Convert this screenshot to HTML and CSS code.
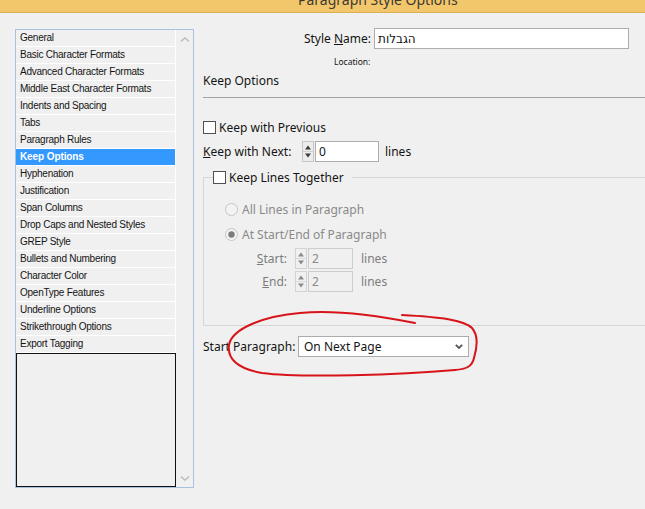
FILE: index.html
```html
<!DOCTYPE html>
<html lang="en">
<head>
  <meta charset="UTF-8">
  <title>Paragraph Style Options</title>
  <link rel="stylesheet" href="styles.css">
</head>
<body>
  <div class="page">
    <div class="titlebar"><span>Paragraph Style Options</span></div>

    <div class="dialog">
      <!-- Category list -->
      <div class="list">
        <ul class="items">
          <li>General</li>
          <li>Basic Character Formats</li>
          <li>Advanced Character Formats</li>
          <li>Middle East Character Formats</li>
          <li>Indents and Spacing</li>
          <li>Tabs</li>
          <li>Paragraph Rules</li>
          <li class="sel">Keep Options</li>
          <li>Hyphenation</li>
          <li>Justification</li>
          <li>Span Columns</li>
          <li>Drop Caps and Nested Styles</li>
          <li>GREP Style</li>
          <li>Bullets and Numbering</li>
          <li>Character Color</li>
          <li>OpenType Features</li>
          <li>Underline Options</li>
          <li>Strikethrough Options</li>
          <li>Export Tagging</li>
          <li class="blank"></li>
        </ul>
        <div class="scroll">
          <svg width="10" height="5" viewBox="0 0 10 5"><polyline points="1,4.5 5,0.8 9,4.5" fill="none" stroke="#b8b8b8" stroke-width="1.3"/></svg>
          <svg width="10" height="5" viewBox="0 0 10 5"><polyline points="1,0.5 5,4.2 9,0.5" fill="none" stroke="#b8b8b8" stroke-width="1.3"/></svg>
        </div>
      </div>

      <!-- Options panel -->
      <div class="panel">
        <div class="name-row">
          <span class="name-label">Style <u>N</u>ame:</span>
          <div class="field name-field">הגבלות</div>
        </div>
        <div class="location">Location:</div>
        <div class="heading">Keep Options</div>
        <div class="rule"></div>

        <div class="check-row"><span class="check"></span>Keep with Previous</div>

        <div class="row">
          <span class="next-label"><u>K</u>eep with Next:</span>
          <svg class="spin" width="12" height="21" viewBox="0 0 12 21">
            <rect x="0.5" y="0.5" width="11" height="20" fill="#ececec" stroke="#c6c6c6"/>
            <line x1="1" y1="10.5" x2="11" y2="10.5" stroke="#d0d0d0"/>
            <path d="M3 8.5 L6 4.5 L9 8.5Z" fill="#3a3a3a"/>
            <path d="M3 12.5 L6 16.5 L9 12.5Z" fill="#3a3a3a"/>
          </svg>
          <div class="field num">0</div>
          <span class="unit">lines</span>
        </div>

        <fieldset class="group">
          <legend><span class="check"></span>Keep Lines Together</legend>
          <div class="radio-row first">
            <svg class="radio" width="13" height="13" viewBox="0 0 13 13"><circle cx="6.5" cy="6.5" r="6" fill="#f3f3f3" stroke="#c4c4c4"/></svg>
            All Lines in Paragraph
          </div>
          <div class="radio-row">
            <svg class="radio" width="13" height="13" viewBox="0 0 13 13"><circle cx="6.5" cy="6.5" r="6" fill="#f3f3f3" stroke="#c4c4c4"/><circle cx="6.5" cy="6.5" r="3.2" fill="#7c7c7c"/></svg>
            At Start/End of Paragraph
          </div>
          <div class="row sub first-sub">
            <span class="sub-label"><u>S</u>tart:</span>
            <svg class="spin" width="12" height="21" viewBox="0 0 12 21">
              <rect x="0.5" y="0.5" width="11" height="20" fill="#f0f0f0" stroke="#d3d3d3"/>
              <line x1="1" y1="10.5" x2="11" y2="10.5" stroke="#dadada"/>
              <path d="M3 8.5 L6 4.5 L9 8.5Z" fill="#8a8a8a"/>
              <path d="M3 12.5 L6 16.5 L9 12.5Z" fill="#8a8a8a"/>
            </svg>
            <div class="field num off">2</div>
            <span class="unit">lines</span>
          </div>
          <div class="row sub">
            <span class="sub-label"><u>E</u>nd:</span>
            <svg class="spin" width="12" height="21" viewBox="0 0 12 21">
              <rect x="0.5" y="0.5" width="11" height="20" fill="#f0f0f0" stroke="#d3d3d3"/>
              <line x1="1" y1="10.5" x2="11" y2="10.5" stroke="#dadada"/>
              <path d="M3 8.5 L6 4.5 L9 8.5Z" fill="#8a8a8a"/>
              <path d="M3 12.5 L6 16.5 L9 12.5Z" fill="#8a8a8a"/>
            </svg>
            <div class="field num off">2</div>
            <span class="unit">lines</span>
          </div>
        </fieldset>

        <div class="row start-row">
          <span class="start-label">Start Para<u>g</u>raph:</span>
          <div class="select">
            On Next Page
            <svg width="8" height="5" viewBox="0 0 8 5"><polyline points="0.8,0.8 4,4 7.2,0.8" fill="none" stroke="#555" stroke-width="1.8"/></svg>
          </div>
        </div>
      </div>
    </div>

    <!-- hand-drawn red mark over the screenshot -->
    <svg class="markup" width="645" height="509" viewBox="0 0 645 509">
      <path d="M415 323 C385 317 340 309 300 313 C265 316 232 328 229 345 C227 360 240 369 262 373 C300 378 400 375 455 370 C466 369 472 367 474 358 C477 348 479 336 472 328 C464 320 440 317 402 315"
            fill="none" stroke="#d8141b" stroke-width="2" stroke-linecap="round"/>
    </svg>
  </div>
</body>
</html>
```

FILE: styles.css
```css
/* Base */
* {
  box-sizing: border-box;
}

body {
  margin: 0;
  background: #f0f0f0;
  font-family: "Noto Sans", "DejaVu Sans", sans-serif;
  font-size: 12px;
  color: #141414;
}

.page {
  position: relative;
  width: 645px;
  height: 509px;
  overflow: hidden;
}

/* Window title (cut off at the top) */
.titlebar {
  height: 13px;
  background: #f2c66b;
  border-bottom: 1px solid #dcae55;
  overflow: hidden;
  padding-left: 298px;
}

.titlebar span {
  display: block;
  margin-top: -10px;
  line-height: 20px;
  font-size: 14px;
  color: #3d3a33;
  white-space: nowrap;
}

.dialog {
  display: flex;
  padding: 15px 0 0 15px;
}

/* Category list */
.list {
  display: flex;
  width: 179px;
  height: 459px;
  margin-top: 1px;
  border: 1px solid #a9c1df;
}

.items {
  list-style: none;
  margin: 0;
  padding: 0;
  width: 160px;
  display: flex;
  flex-direction: column;
  font-family: "Liberation Sans", Arial, sans-serif;
  font-size: 10px;
  letter-spacing: -0.25px;
}

.items li {
  height: 17px;
  line-height: 16px;
  padding-left: 4px;
  border-bottom: 1px solid #fff;
  border-right: 1px solid #fff;
  white-space: nowrap;
}

.items li.sel {
  background: #3399ff;
  color: #fff;
  font-weight: bold;
  letter-spacing: -0.1px;
}

.items li.blank {
  flex: 1;
  border: 1px solid #111;
}

.scroll {
  flex: 1;
  display: flex;
  flex-direction: column;
  justify-content: space-between;
  align-items: center;
  padding: 7px 0 6px;
}

.scroll svg {
  display: block;
}

/* Options panel */
.panel {
  flex: 1;
  margin-left: 9px;
}

.name-row {
  display: flex;
  justify-content: flex-end;
  align-items: center;
  height: 21px;
  padding-right: 16px;
}

.name-label {
  margin-right: 3px;
}

.field {
  height: 21px;
  line-height: 19px;
  background: #fff;
  border: 1px solid #abadb3;
  padding-left: 3px;
}

.name-field {
  width: 255px;
}

.location {
  margin-top: 7px;
  padding-left: 131px;
  line-height: 12px;
  font-size: 8.5px;
}

.heading {
  margin-top: 5px;
  line-height: 16px;
}

.rule {
  margin-top: 8px;
  border-top: 1px solid #a3a3a3;
}

.check {
  display: inline-block;
  width: 13px;
  height: 13px;
  background: #fff;
  border: 1px solid #505050;
  margin-right: 3px;
}

.check-row {
  display: flex;
  align-items: center;
  height: 16px;
  margin-top: 21px;
}

.row {
  display: flex;
  align-items: center;
  height: 21px;
  margin-top: 6px;
}

.next-label {
  width: 99px;
}

.spin {
  display: block;
  margin-right: 1px;
}

.num {
  width: 64px;
}

.unit {
  margin-left: 6px;
}

/* Keep Lines Together group */
.group {
  margin: 7px 0 0;
  padding: 0 0 33px 9px;
  border: 1px solid #d6d6d6;
  border-right: none;
  min-width: 0;
}

.group legend {
  display: flex;
  align-items: center;
  height: 16px;
  padding: 0 8px 0 0;
}

.radio-row {
  display: flex;
  align-items: center;
  height: 16px;
  margin: 9px 0 0 12px;
  color: #8a8a8a;
}

.radio-row.first {
  margin-top: 16px;
}

.radio {
  display: block;
  margin-right: 4px;
}

.sub {
  color: #7d7d7d;
  margin-top: 2px;
}

.sub.first-sub {
  margin-top: 6px;
}

.sub-label {
  width: 74px;
  text-align: right;
  margin-right: 8px;
}

.sub .num {
  width: 45px;
}

.num.off {
  background: #f0f0f0;
  border-color: #cdcdcd;
  color: #8a8a8a;
}

.sub .unit {
  margin-left: 8px;
}

/* Start Paragraph */
.start-row {
  margin-top: 10px;
}

.start-label {
  width: 95px;
}

.select {
  display: flex;
  align-items: center;
  justify-content: space-between;
  width: 171px;
  height: 21px;
  padding: 0 5px 0 5px;
  background: #fff;
  border: 1px solid #acacac;
}

.select svg {
  display: block;
}

/* red annotation */
.markup {
  position: absolute;
  top: 0;
  left: 0;
  pointer-events: none;
}
```
